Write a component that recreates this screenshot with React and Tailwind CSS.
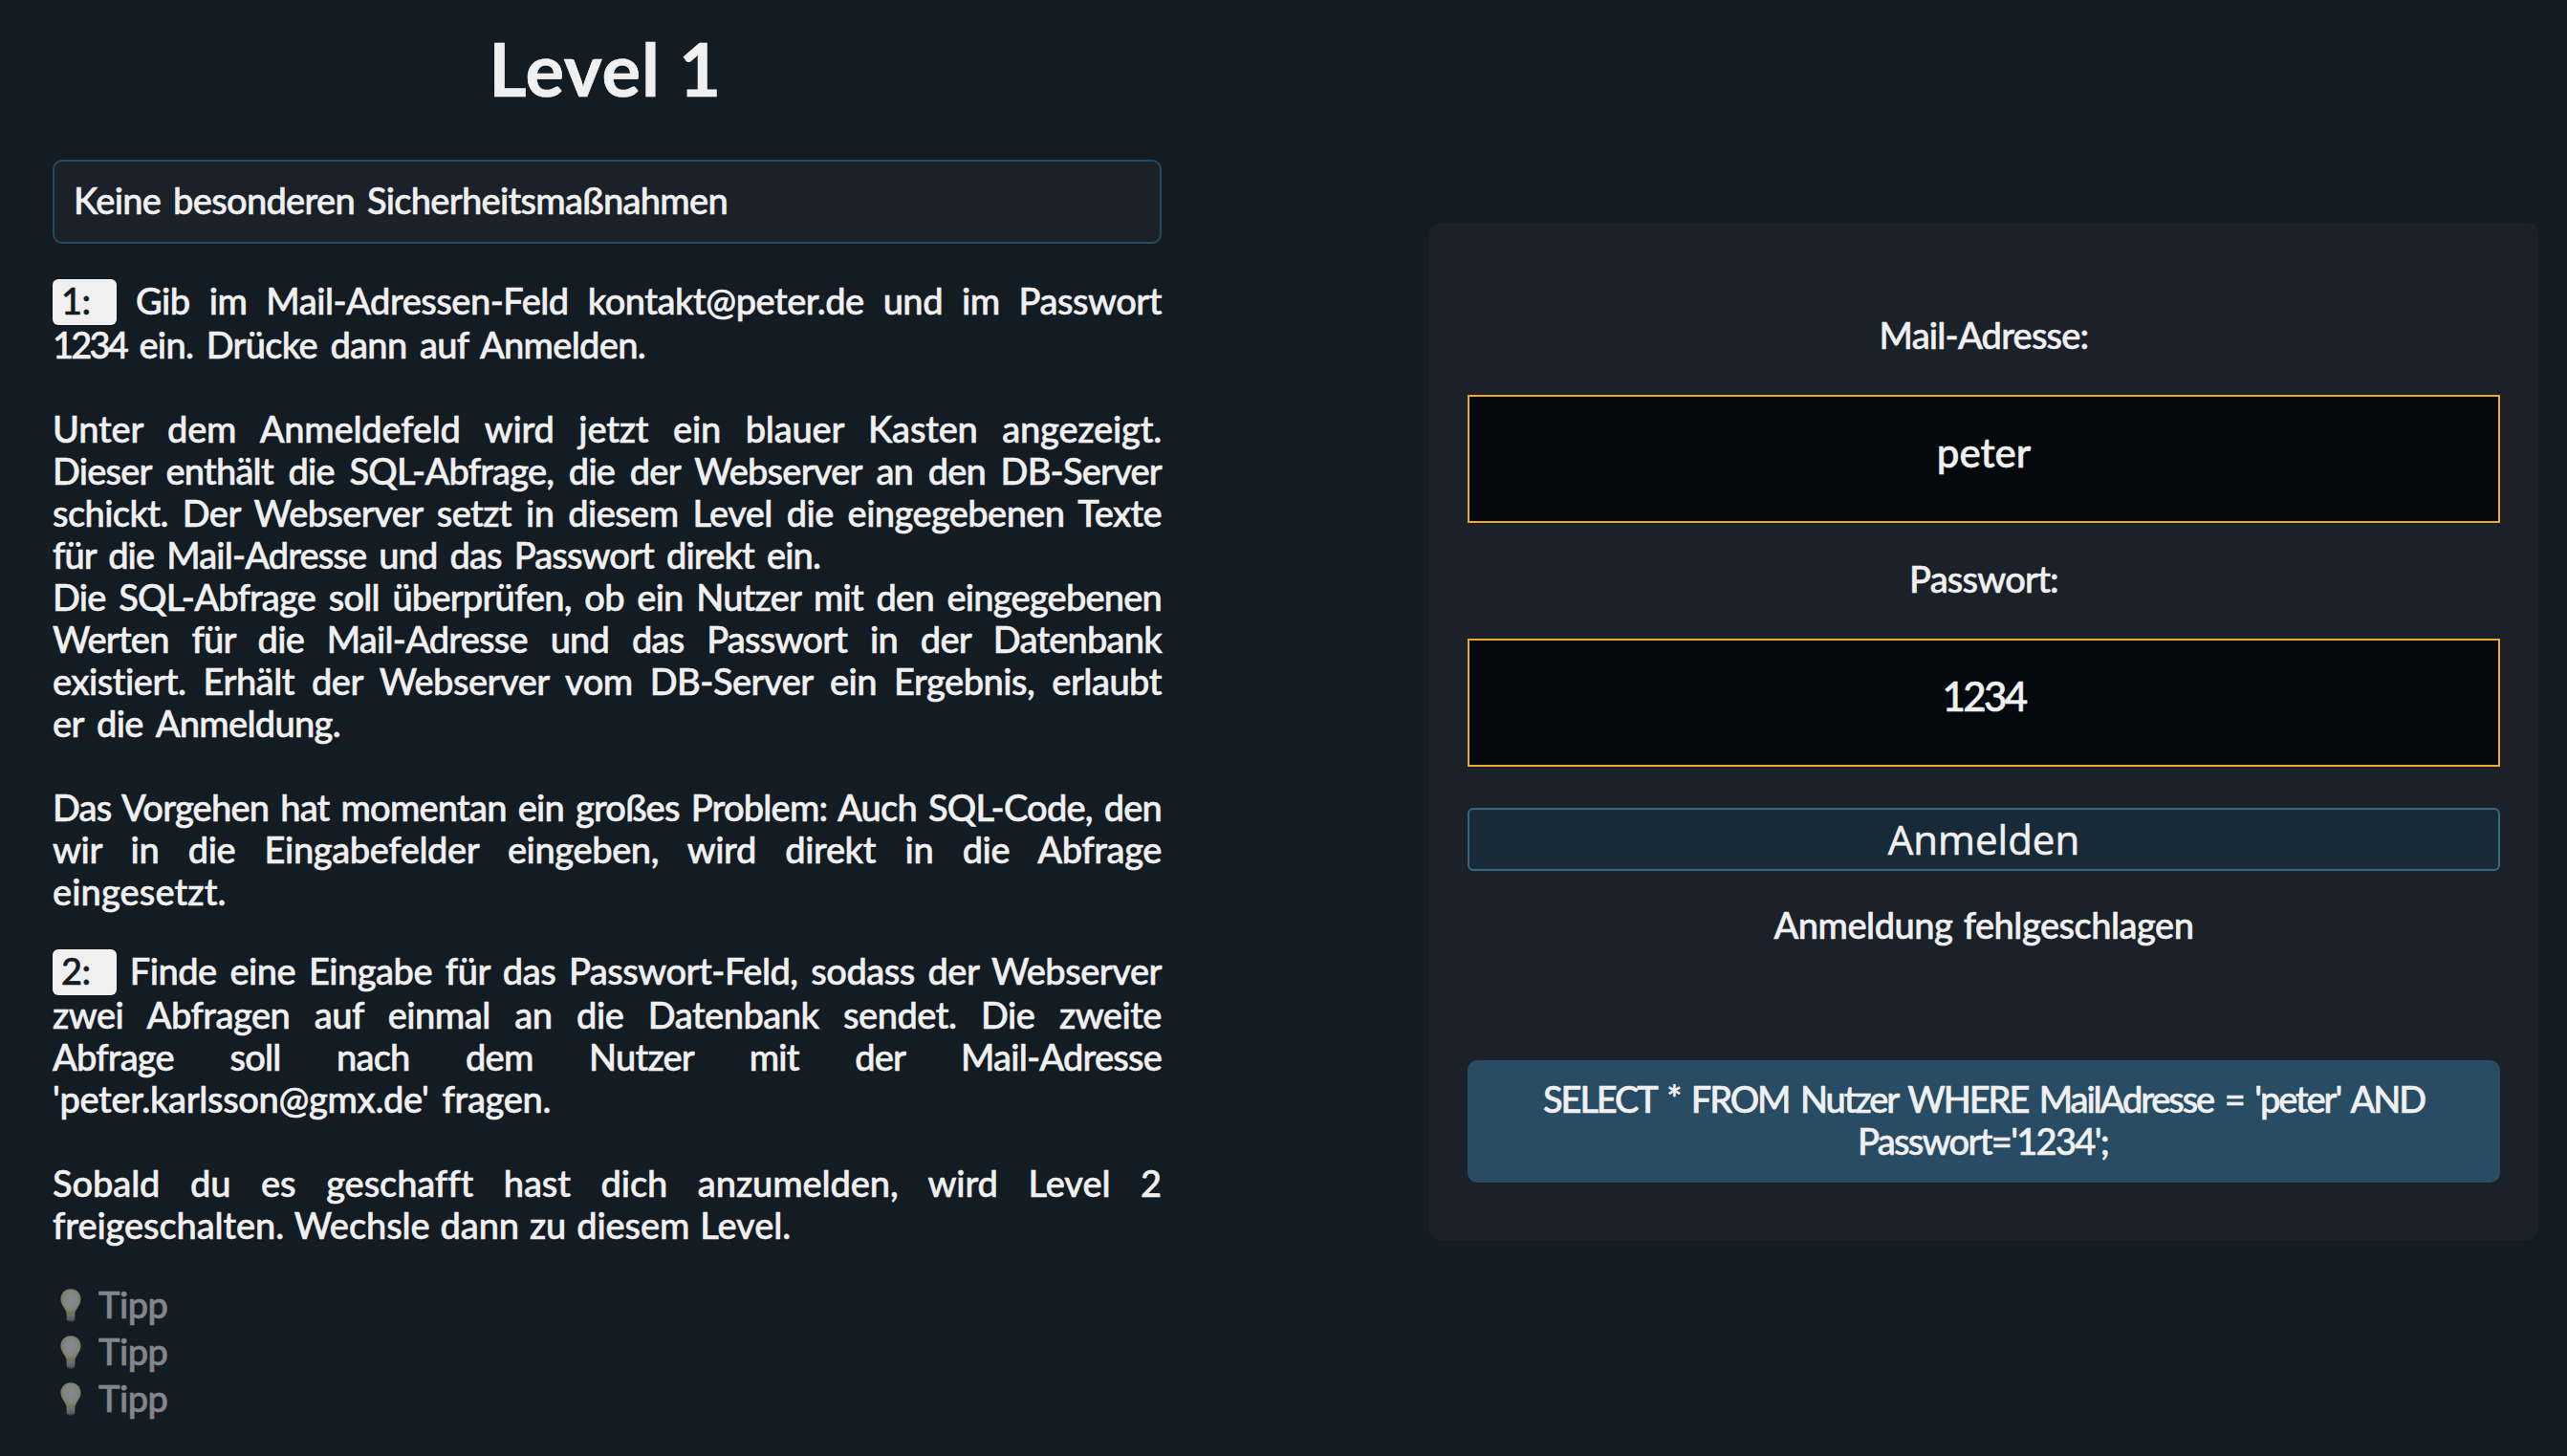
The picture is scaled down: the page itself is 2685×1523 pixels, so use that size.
import React from 'react';

const introLines = [
    { digits: '1234', text: ' ein. Drücke dann auf Anmelden.', cls: 'w-[620px] tracking-[-0.7px]' },
    { text: '' },
    { text: 'Unter dem Anmeldefeld wird jetzt ein blauer Kasten angezeigt.', cls: 'w-full tracking-[-0.2px]' },
    { text: 'Dieser enthält die SQL-Abfrage, die der Webserver an den DB-Server' },
    { text: 'schickt. Der Webserver setzt in diesem Level die eingegebenen Texte', cls: 'w-full tracking-[-0.6px]' },
    { text: 'für die Mail-Adresse und das Passwort direkt ein.', cls: 'w-[803px] tracking-[-0.9px]' },
    { text: 'Die SQL-Abfrage soll überprüfen, ob ein Nutzer mit den eingegebenen' },
    { text: 'Werten für die Mail-Adresse und das Passwort in der Datenbank' },
    { text: 'existiert. Erhält der Webserver vom DB-Server ein Ergebnis, erlaubt', cls: 'w-full tracking-[-0.5px]' },
    { text: 'er die Anmeldung.', cls: 'w-[301px] tracking-[-0.7px]' },
    { text: '' },
    { text: 'Das Vorgehen hat momentan ein großes Problem: Auch SQL-Code, den' },
    { text: 'wir in die Eingabefelder eingeben, wird direkt in die Abfrage', cls: 'w-full tracking-[-0.4px]' },
    { text: 'eingesetzt.', cls: 'w-[182px] tracking-[0.1px]' },
];

const taskLines = [
    { text: 'zwei Abfragen auf einmal an die Datenbank sendet. Die zweite', cls: 'w-full tracking-[-0.5px]' },
    { text: 'Abfrage soll nach dem Nutzer mit der Mail-Adresse' },
    { text: "'peter.karlsson@gmx.de' fragen.", cls: 'w-[521px] tracking-[-0.35px]' },
    { text: '' },
    { text: 'Sobald du es geschafft hast dich anzumelden, wird Level 2', cls: 'w-full tracking-[-0.1px]' },
    { text: 'freigeschalten. Wechsle dann zu diesem Level.', cls: 'w-[772px] tracking-[-0.1px]' },
];

const Line = ({ digits, text, cls = 'w-full tracking-[-0.8px]' }) => (
    <div className={`h-11 whitespace-nowrap [text-align-last:justify] ${cls}`}>
        {digits && <span className="tracking-[-2.8px]">{digits}</span>}
        {text}
    </div>
);

const Step = ({ number, first, lines }) => (
    <div>
        <div className="h-[46px] whitespace-nowrap tracking-[-0.5px] [text-align-last:justify]">
            <span className="inline-block h-12 w-[67px] rounded-md bg-[#f0f0f0] pl-[9px] text-[#141c23] [text-align-last:left]">
                {number}:
            </span>{' '}
            {first}
        </div>
        {lines.map((line, i) => (
            <Line key={i} {...line} />
        ))}
    </div>
);

const Bulb = () => (
    <svg width="22" height="36" viewBox="0 0 22 36" fill="none">
        <defs>
            <radialGradient id="glass" cx="0.5" cy="0.42" r="0.56">
                <stop offset="0" stopColor="#f6fafa" />
                <stop offset="0.6" stopColor="#eeefdc" />
                <stop offset="0.85" stopColor="#dfd79c" />
                <stop offset="1" stopColor="#cdbd62" />
            </radialGradient>
            <linearGradient id="socket" x1="0" y1="0" x2="0" y2="1">
                <stop offset="0" stopColor="#d2d2d2" />
                <stop offset="0.7" stopColor="#999999" />
                <stop offset="1" stopColor="#333333" />
            </linearGradient>
        </defs>
        <path
            d="M11 0.2C5 0.2 0.4 4.8 0.4 10.8C0.4 14.8 2.4 17.6 4.3 20.6C5.9 23.2 6.5 24.6 6.7 27H15.3C15.5 24.6 16.1 23.2 17.7 20.6C19.6 17.6 21.6 14.8 21.6 10.8C21.6 4.8 17 0.2 11 0.2Z"
            fill="url(#glass)"
        />
        <path d="M6.7 26.5H15.3V31.5C15.3 33 14.3 34 13.2 34.4C12.6 35.2 9.4 35.2 8.8 34.4C7.7 34 6.7 33 6.7 31.5Z" fill="url(#socket)" />
    </svg>
);

const Tip = () => (
    <div className="flex h-[49px] pl-2 opacity-50">
        <div className="pt-2">
            <Bulb />
        </div>
        <span className="pl-[18px] leading-[48px] tracking-[-0.5px]">Tipp</span>
    </div>
);

const Field = ({ label, value, spacing }) => (
    <div className="text-center">
        <div className="h-11 tracking-[-0.8px]">{label}</div>
        <div className={`mt-[41px] h-[134px] border-2 border-[#f0a632] bg-[#03090c] text-[42px] leading-[116px] ${spacing}`}>
            {value}
        </div>
    </div>
);

const App = () => {
    return (
        <div className="flex h-screen items-start overflow-hidden bg-[#141c23] pl-[55px] font-['Lato',sans-serif] text-[38px] leading-[44px] font-medium text-[#f0f0f0] [-webkit-text-stroke:0.6px]">
            <main className="w-[1160px]">
                <h1 className="mt-7 pr-1 text-center text-[76px] leading-[88px] font-bold tracking-[0.8px]">Level 1</h1>

                <div className="mt-[51px] h-[88px] rounded-[10px] border-2 border-[#244a63] bg-[#1a2128] px-5 pt-[18px]">
                    <Line text="Keine besonderen Sicherheitsmaßnahmen" cls="w-[684px] tracking-[-0.7px]" />
                </div>

                <div className="mt-[37px]">
                    <Step number={1} first="Gib im Mail-Adressen-Feld kontakt@peter.de und im Passwort" lines={introLines} />
                </div>
                <div className="mt-[39px]">
                    <Step number={2} first="Finde eine Eingabe für das Passwort-Feld, sodass der Webserver" lines={taskLines} />
                </div>

                <div className="mt-[37px]">
                    <Tip />
                    <Tip />
                    <Tip />
                </div>
            </main>

            <section className="mt-[233px] ml-[280px] flex h-[1064px] w-[1160px] flex-col rounded-[10px] bg-[#1a2128] px-10 pt-[95px]">
                <Field label="Mail-Adresse:" value="peter" spacing="tracking-normal" />
                <div className="mt-9">
                    <Field label="Passwort:" value="1234" spacing="tracking-[-2.6px]" />
                </div>
                <button className="mt-[43px] h-[66px] rounded-md border-2 border-[#386685] bg-[#182a37] font-['Open_Sans',sans-serif] text-[42px] leading-[60px] font-normal">
                    Anmelden
                </button>
                <div className="mt-[34px] flex justify-center">
                    <Line text="Anmeldung fehlgeschlagen" cls="w-[439px] tracking-[-0.5px]" />
                </div>
                <div className="mt-[120px] flex h-32 flex-col items-center rounded-[10px] bg-[#274c64] pt-[18px]">
                    <Line text="SELECT * FROM Nutzer WHERE MailAdresse = 'peter' AND" cls="w-[922px] tracking-[-2.1px]" />
                    <Line text="Passwort='1234';" cls="w-[264px] tracking-[-1.7px]" />
                </div>
            </section>
        </div>
    );
};

export default App;
